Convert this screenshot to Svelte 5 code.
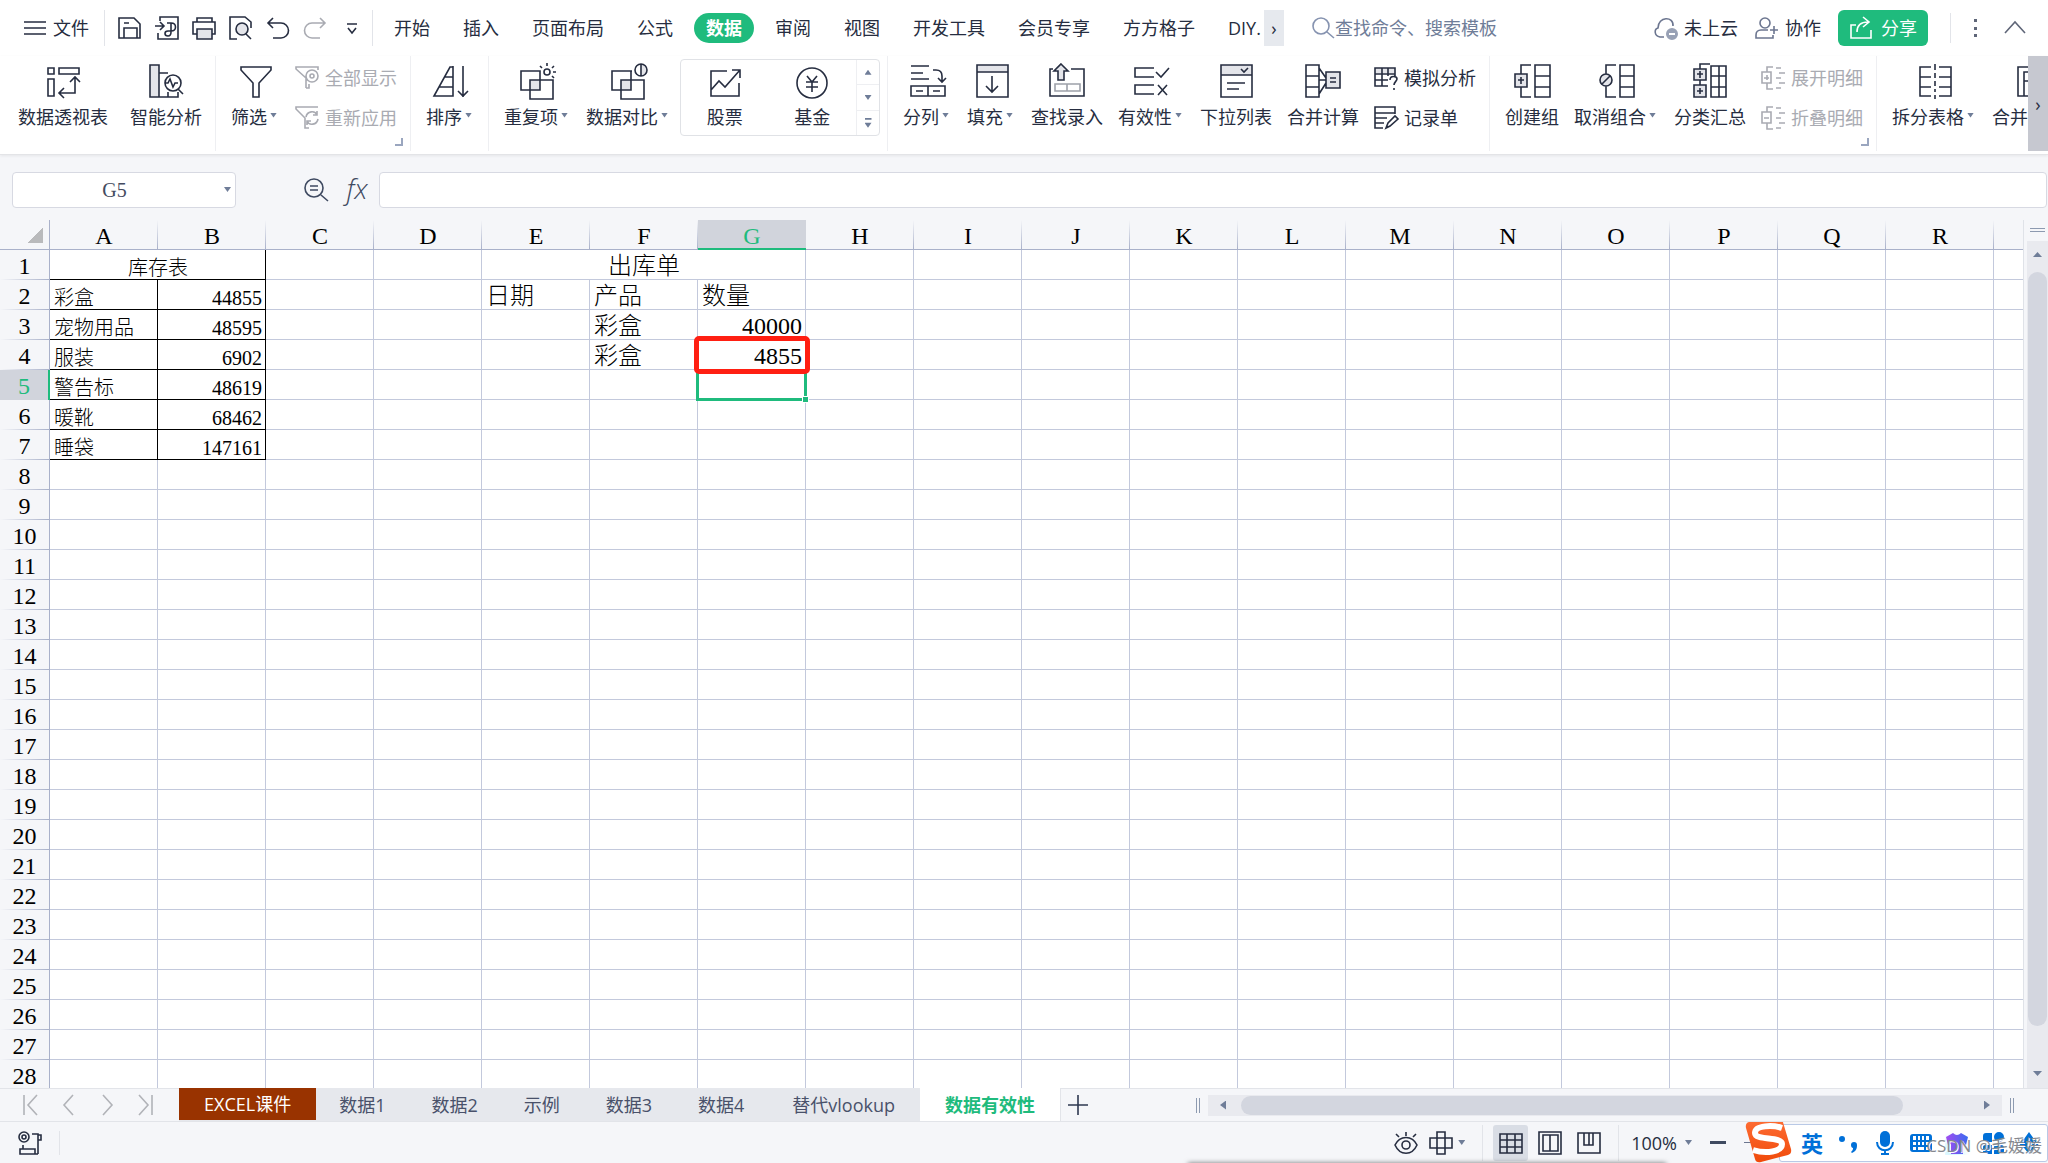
<script>
	let activeMenu = $state('数据');
	let activeSheet = $state('数据有效性');
	let zoom = $state(100);
	let cellName = $state('G5');
	let formula = $state('');

	// line: stroked path, shade: light filled area behind, solid: filled with the text colour
	const icons = {
		menu: { size: 24, line: 'M1 6h22M1 12h22M1 18h22' },
		save: { size: 24, line: 'M1 2h15l6 6v14H1zM6 22V12h13v10M6 7h5' },
		output: {
			size: 24,
			line: 'M5 5V1h18v22H3v-6M0 10h8M5 6l4 4-4 4M12 7h4c6 0 6 8 0 8h-3c-4 0-4 5 0 5 3 0 3-2 3-4V7'
		},
		print: { size: 24, shade: 'M5 13h15v10H5z', line: 'M5 6V2h15v4M5 18H1V6h22v12h-3M5 13h15v10H5z' },
		preview: {
			size: 24,
			shade: 'M7 13a6 6 0 1 0 12 0a6 6 0 1 0-12 0z',
			line: 'M8 23H1V1h15l6 5v6M7 13a6 6 0 1 0 12 0a6 6 0 1 0-12 0zM17 18l5 5'
		},
		undo: { size: 24, line: 'M7 2L2 7l5 5M2 7h13a7 7 0 0 1 0 15H7' },
		redo: { size: 24, line: 'M17 2l5 5-5 5M22 7H9a7 7 0 0 0 0 15h8' },
		more: { size: 24, line: 'M7 8h10M8 12l4 5 4-5' },
		search: { size: 24, line: 'M2 10a8 8 0 1 0 16 0a8 8 0 1 0-16 0zM16 16l7 6' },
		cloud: {
			size: 24,
			line: 'M10 21H6c-6-1-6-8-2-9 0-12 16-12 15-2',
			solid: 'M12 18a6 6 0 1 1 12 0a6 6 0 1 1-12 0zM15 17v2h6v-2z'
		},
		person: {
			size: 24,
			line: 'M5 7a5 5 0 1 0 10 0a5 5 0 1 0-10 0zM13 14H6c-3 0-5 2-5 5v3h17v-3M15 14h8M19 10v8'
		},
		share: { size: 24, line: 'M7 9H2v13h20v-8M8 16c0-6 3-10 11-10M14 1l6 5-6 5' },
		dots: { size: 24, solid: 'M11 3h3v3h-3zM11 11h3v3h-3zM11 18h3v3h-3z' },
		up: { size: 24, line: 'M2 17L12 6l10 11' },
		pivot: {
			size: 36,
			line: 'M3 5h6v6H3zM14 5h20v6H14zM3 16h6v17H3zM30 14v16H15M25 19l5-5 5 5M19 25l-5 5 5 5'
		},
		smart: {
			size: 36,
			shade: 'M2 2h9v32H2z',
			line: 'M2 2h9v32H2zM11 10h9M11 34h19v-5M20 34v-5M17 20a8 8 0 1 0 16 0a8 8 0 1 0-16 0zM30 26l5 5M17 20h3l2-4 3 8 2-4h3'
		},
		filter: { size: 36, line: 'M3 4h30v3L21 20v14h-6V20L3 7z' },
		showAll: {
			size: 24,
			line: 'M11 22V12L1 3V1h22v3M11 22h3v-4M11 10a6 6 0 1 0 12 0a6 6 0 1 0-12 0zM15 10a2 2 0 1 0 4 0a2 2 0 1 0-4 0z'
		},
		reapply: {
			size: 24,
			line: 'M14 22h-4V12L1 3V1h22M11 11c1-6 9-7 11-2M22 5v4h-4M23 13c-1 6-9 7-11 2M12 19v-4h4'
		},
		sort: { size: 36, line: 'M20 3v30H1L17 4h3M12 14h8M6 24h14M30 3v31M25 28l5 5 5-5' },
		duplicate: {
			size: 36,
			shade: 'M10 17h10v10H10z',
			line: 'M1 8h19v19H1zM10 17h23v19H10zM24 9a3 3 0 1 0 6 0a3 3 0 1 0-6 0zM27 0v3M20 3l2 2M34 3l-2 2M33 9h3M32 13l2 2'
		},
		compare: {
			size: 36,
			shade: 'M10 17h10v10H10zM30 1a6 6 0 0 1 0 12z',
			line: 'M21 8H1v19h19V17M10 17h23v19H10zM20 8v9M24 7a6 6 0 1 0 12 0a6 6 0 1 0-12 0zM30 1v12'
		},
		stock: { size: 36, line: 'M20 8H4v25h28V20M4 27l8-9 6 6L33 7M25 7h8v8' },
		fund: {
			size: 36,
			line: 'M3 20a15 15 0 1 0 30 0a15 15 0 1 0-30 0zM13 13l5 6 5-6M18 19v10M12 19h12M12 24h12'
		},
		columns: {
			size: 36,
			line: 'M1 3h18M1 10h12M1 16h18M23 7h3q6 0 6 6v6M28 15l4 4 4-4M1 23h34v10H1zM18 23v10M6 28h7M23 28h7'
		},
		fill: { size: 36, shade: 'M3 2h31v7H3z', line: 'M3 2h31v32H3zM3 9h31M18 13v16M12 23l6 6 6-6' },
		findEntry: {
			size: 36,
			shade: 'M12 1l7 7h-4v9H9V8H5z',
			line: 'M4 6H1v27h34V6H22M12 1l7 7h-4v9H9V8H5z',
			faint: 'M6 21h25v7H6zM18 21v7'
		},
		validity: { size: 36, line: 'M20 5H1v9h19M20 22H1v9h19M22 9l5 5 8-9M24 22l9 10M33 22l-9 10' },
		dropdown: {
			size: 36,
			shade: 'M3 2h31v10H3z',
			line: 'M3 2h31v32H3zM3 12h31M23 6l3 3 4-4M9 20h18M9 26h12'
		},
		consolidate: {
			size: 36,
			shade: 'M21 9h14v16H21z',
			line: 'M1 2h13v32H1zM1 13h13M1 24h13M21 9h14v16H21zM25 15h6M25 19h6M14 5l7 10M14 17h7M14 31l7-11'
		},
		whatIf: {
			size: 24,
			shade: 'M1 2h20v5H1z',
			line: 'M14 20H1V2h20v8M1 8h20M1 14h13M8 2v18M14 2v8M16 14c0-5 7-4 7-1 0 2-3 3-3 6M20 22v2'
		},
		record: { size: 24, line: 'M9 22H1v-6M21 8V1H1v6h20M1 12h12M1 17h9M1 7v9M12 22l2-5 7-7 3 3-8 7z' },
		group: {
			size: 36,
			shade: 'M1 11h12v13H1z',
			line: 'M1 11h12v13H1zM4 17h6M7 14v7M17 2H7v9M7 24v10h10M21 2h15v32H21zM21 13h15M21 24h15'
		},
		ungroup: {
			size: 36,
			shade: 'M1 17a6 6 0 1 0 12 0a6 6 0 1 0-12 0z',
			line: 'M1 17a6 6 0 1 0 12 0a6 6 0 1 0-12 0zM3 21l8-8M17 2H7v9M7 23v11h10M21 2h14v32H21zM21 13h14M21 24h14'
		},
		subtotal: {
			size: 36,
			shade: 'M2 6h12v11H2zM2 22h12v12H2z',
			line: 'M2 6h12v11H2zM2 22h12v12H2zM8 8v7M5 11h6M8 25v6M5 28h6M8 6V1h10M8 17v5M19 3h15v31H19zM27 3v31M19 13h15M19 24h15'
		},
		expand: {
			size: 24,
			line: 'M1 6h9v11H1zM3 12h5M6 9v5M6 6V1h6M6 17v6h6M15 2h5M18 7h6M15 12h5M18 17h6M15 22h5'
		},
		collapse: {
			size: 24,
			line: 'M1 6h9v11H1zM3 12h5M6 6V1h6M6 17v6h6M15 2h5M18 7h6M15 12h5M18 17h6M15 22h5'
		},
		split: {
			size: 36,
			line: 'M14 4H3v29h11M3 14h11M3 24h11M22 4h12v29H22M22 14h12M22 24h12M18 1v6M18 10v5M18 18v5M18 26v3M18 32v4'
		},
		merge: { size: 36, line: 'M22 4H1v29h6M7 33V9h20v24zM7 18h20' },
		formulaSearch: { size: 24, line: 'M1 10a9 9 0 1 0 18 0a9 9 0 1 0-18 0zM17 17l7 6M6 8h8M6 12h8' },
		first: { size: 24, line: 'M5 2v20M18 2L9 12l9 10' },
		prev: { size: 24, line: 'M16 2L7 12l9 10' },
		next: { size: 24, line: 'M8 2l9 10-9 10' },
		last: { size: 24, line: 'M19 2v20M6 2l9 10-9 10' },
		add: { size: 24, line: 'M12 2v20M2 12h20' },
		macro: {
			size: 24,
			line: 'M1 6a5 5 0 1 0 10 0a5 5 0 1 0-10 0zM4 6a2 2 0 1 0 4 0a2 2 0 1 0-4 0zM14 3h6v20M20 4h3v5h-3M5 14v4M2 18h15v5H2zM17 23h3'
		},
		eye: {
			size: 24,
			line: 'M1 14c5-10 17-10 22 0-5 11-17 11-22 0zM8 14a4 4 0 1 0 8 0a4 4 0 1 0-8 0zM12 1v4M2 3l3 3M22 3l-3 3'
		},
		cross: { size: 24, line: 'M8 1h8v22H8zM1 7h22v10H1z' },
		normal: { size: 24, line: 'M1 3h22v19H1zM8 3v19M16 3v19M1 9h22M1 16h22' },
		pageView: { size: 24, line: 'M1 1h22v22H1zM5 4h15v16H5zM12 4v16' },
		breakView: { size: 24, line: 'M1 2h22v20H1zM7 2v12h9V2M12 2v12' },
		mic: {
			size: 24,
			line: 'M4 11c0 11 16 11 16 0M12 19v4M8 23h8',
			solid: 'M7 5a5 5 0 0 1 10 0v6a5 5 0 0 1-10 0z'
		},
		keyboard: {
			size: 24,
			solid:
				'M4 3h16a3 3 0 0 1 3 3v12a3 3 0 0 1-3 3H4a3 3 0 0 1-3-3V6a3 3 0 0 1 3-3zM4 5v4h3V5zM9 5v4h2V5zM13 5v4h2V5zM17 5v4h3V5zM4 11v3h3v-3zM9 11v3h2v-3zM13 11v3h2v-3zM17 11v3h3v-3zM4 16v3h3v-3zM9 16v3h6v-3zM17 16v3h3v-3z'
		},
		punctuation: {
			size: 24,
			solid: 'M2 8a3 3 0 1 0 6 0a3 3 0 1 0-6 0zM14 14a3 3 0 0 1 6 0c0 4-1 6-5 8l-1-1c2-2 2-3 2-4-1 0-2-1-2-3z'
		},
		shirt: { size: 24, solid: 'M8 2q4 4 8 0l7 4-2 8-3-1v10H6V13l-3 1-2-8z' },
		tools: {
			size: 24,
			solid:
				'M2 5a3 3 0 0 1 3-3h6v9H5a3 3 0 0 1-3-3zM13 6a4 4 0 1 1 10 0a4 4 0 1 1-10 0zM2 14h9v9H5a3 3 0 0 1-3-3zM13 14h7a3 3 0 0 1 3 3v3a3 3 0 0 1-3 3h-7z'
		},
		diamond: { size: 24, solid: 'M12 1l5 7 6 4-6 5-5 6-5-6-6-5 6-4zM10 10v5h4v-5z' }
	};

	const quickTools = [
		['save', '保存'],
		['output', '输出为PDF'],
		['print', '打印'],
		['preview', '打印预览'],
		['undo', '撤销'],
		['redo', '恢复'],
		['more', '自定义']
	];

	const menus = ['开始', '插入', '页面布局', '公式', '数据', '审阅', '视图', '开发工具', '会员专享', '方方格子', 'DIY.'];

	const ribbon = [
		{ wide: true, tools: [{ icon: 'pivot', name: '数据透视表' }, { icon: 'smart', name: '智能分析' }] },
		{
			corner: true,
			tools: [
				{ icon: 'filter', name: '筛选', arrow: true },
				{ off: true, stack: [['showAll', '全部显示'], ['reapply', '重新应用']] }
			]
		},
		{ tools: [{ icon: 'sort', name: '排序', arrow: true }] },
		{
			gallery: [['stock', '股票'], ['fund', '基金']],
			tools: [
				{ icon: 'duplicate', name: '重复项', arrow: true },
				{ icon: 'compare', name: '数据对比', arrow: true }
			]
		},
		{
			tools: [
				{ icon: 'columns', name: '分列', arrow: true },
				{ icon: 'fill', name: '填充', arrow: true },
				{ icon: 'findEntry', name: '查找录入' },
				{ icon: 'validity', name: '有效性', arrow: true },
				{ icon: 'dropdown', name: '下拉列表' },
				{ icon: 'consolidate', name: '合并计算' },
				{ stack: [['whatIf', '模拟分析'], ['record', '记录单']] }
			]
		},
		{
			corner: true,
			tools: [
				{ icon: 'group', name: '创建组' },
				{ icon: 'ungroup', name: '取消组合', arrow: true },
				{ icon: 'subtotal', name: '分类汇总' },
				{ off: true, stack: [['expand', '展开明细'], ['collapse', '折叠明细']] }
			]
		},
		{
			tools: [
				{ icon: 'split', name: '拆分表格', arrow: true },
				{ icon: 'merge', name: '合并表格', arrow: true }
			]
		}
	];

	const columns = 'ABCDEFGHIJKLMNOPQR'.split('').concat('');
	const rows = Array.from({ length: 28 }, (_, i) => i + 1);

	const stockRows = [
		['彩盒', 44855],
		['宠物用品', 48595],
		['服装', 6902],
		['警告标', 48619],
		['暖靴', 68462],
		['睡袋', 147161]
	];

	const cells = {
		A1: { text: '库存表', span: 2, box: true, center: true },
		E1: { text: '出库单', span: 3, center: true, large: true },
		E2: { text: '日期', large: true },
		F2: { text: '产品', large: true },
		G2: { text: '数量', large: true },
		F3: { text: '彩盒', large: true },
		G3: { text: 40000, large: true },
		F4: { text: '彩盒', large: true },
		G4: { text: 4855, large: true, marked: true },
		G5: { text: '', selected: true }
	};
	stockRows.forEach(([name, amount], i) => {
		cells['A' + (i + 2)] = { text: name, box: true };
		cells['B' + (i + 2)] = { text: amount, box: true };
	});

	// cells of one row, leaving out the ones covered by a merge
	function rowCells(row) {
		const out = [];
		for (let i = 0; i < columns.length; ) {
			const cell = cells[columns[i] + row] || { text: '' };
			out.push(cell);
			i += cell.span || 1;
		}
		return out;
	}

	const sheets = ['EXCEL课件', '数据1', '数据2', '示例', '数据3', '数据4', '替代vlookup', '数据有效性'];
</script>

{#snippet icon(name)}
	{@const i = icons[name]}
	<svg class="icon" width={i.size} height={i.size} viewBox="0 0 {i.size} {i.size}" aria-hidden="true">
		{#if i.shade}<path class="shade" d={i.shade} />{/if}
		{#if i.solid}<path class="solid" fill-rule="evenodd" d={i.solid} />{/if}
		{#if i.faint}<path class="line faint" d={i.faint} />{/if}
		{#if i.line}<path class="line" d={i.line} />{/if}
	</svg>
{/snippet}

<div class="app">
	<header class="titlebar">
		<button class="file">{@render icon('menu')}文件</button>
		<div class="quick">
			{#each quickTools as [name, title]}
				<button {title} aria-label={title} class:off={name === 'redo'}>{@render icon(name)}</button>
			{/each}
		</div>
		<nav class="menus">
			{#each menus as m}
				<button class="menu" class:active={m === activeMenu} onclick={() => (activeMenu = m)}>{m}</button>
			{/each}
		</nav>
		<button class="menu-next" aria-label="更多选项卡">›</button>
		<label class="search">
			{@render icon('search')}
			<input type="text" placeholder="查找命令、搜索模板" />
		</label>
		<div class="account">
			<button class="soft">{@render icon('cloud')}<span>未上云</span></button>
			<button class="soft">{@render icon('person')}<span>协作</span></button>
			<button class="share">{@render icon('share')}分享</button>
			<div class="window">
				<button aria-label="更多">{@render icon('dots')}</button>
				<button aria-label="收起功能区">{@render icon('up')}</button>
			</div>
		</div>
	</header>

	<div class="ribbon">
		<div class="groups">
			{#each ribbon as g}
				<div class="group" class:wide={g.wide} class:corner={g.corner}>
					{#each g.tools as t}
						{#if t.stack}
							<div class="stack" class:off={t.off}>
								{#each t.stack as [name, label]}
									<button disabled={t.off}>{@render icon(name)}{label}</button>
								{/each}
							</div>
						{:else}
							<button class="tool">
								{@render icon(t.icon)}
								<span class="label">{t.name}{#if t.arrow}<i class="arrow"></i>{/if}</span>
							</button>
						{/if}
					{/each}
					{#if g.gallery}
						<div class="gallery">
							{#each g.gallery as [name, label]}
								<button class="tool">{@render icon(name)}<span class="label">{label}</span></button>
							{/each}
							<div class="gallery-scroll">
								<button aria-label="上一行"><i class="arrow rise"></i></button>
								<button aria-label="下一行"><i class="arrow"></i></button>
								<button aria-label="展开"><i class="arrow barred"></i></button>
							</div>
						</div>
					{/if}
				</div>
			{/each}
		</div>
		<button class="ribbon-next" aria-label="向右滚动">›</button>
	</div>

	<div class="formula-bar">
		<div class="name-box">
			<input type="text" aria-label="名称框" bind:value={cellName} />
			<i class="arrow"></i>
		</div>
		<button class="lookup" aria-label="查找公式">{@render icon('formulaSearch')}</button>
		<button class="fx">fx</button>
		<input class="formula" type="text" aria-label="编辑栏" bind:value={formula} />
	</div>

	<main class="sheet">
		<div class="grid">
			<table>
				<thead>
					<tr>
						<th class="all"></th>
						{#each columns as c}
							<th class="col" class:current={c === 'G'}>{c}</th>
						{/each}
					</tr>
				</thead>
				<tbody>
					{#each rows as r}
						<tr>
							<th class="row" class:current={r === 5}>{r}</th>
							{#each rowCells(r) as c}
								<td
									colspan={c.span || 1}
									class:box={c.box}
									class:center={c.center}
									class:large={c.large}
									class:number={typeof c.text === 'number'}
									class:marked={c.marked}
									class:selected={c.selected}>{c.text}</td
								>
							{/each}
						</tr>
					{/each}
				</tbody>
			</table>
		</div>
		<div class="vscroll">
			<div class="vsplit"></div>
			<div class="vtrack">
				<i class="arrow rise"></i>
				<div class="thumb"></div>
				<i class="arrow"></i>
			</div>
		</div>
	</main>

	<div class="tabbar">
		<div class="sheet-nav">
			<button aria-label="第一个">{@render icon('first')}</button>
			<button aria-label="上一个">{@render icon('prev')}</button>
			<button aria-label="下一个">{@render icon('next')}</button>
			<button aria-label="最后一个">{@render icon('last')}</button>
		</div>
		<div class="tabs">
			{#each sheets as s, i}
				<button
					class="tab"
					class:long={s.length > 4}
					class:brown={i === 0}
					class:active={s === activeSheet}
					onclick={() => (activeSheet = s)}>{s}</button
				>
			{/each}
		</div>
		<button class="add" aria-label="新建工作表">{@render icon('add')}</button>
		<div class="hscroll">
			<div class="grip"></div>
			<div class="htrack">
				<i class="arrow left"></i>
				<div class="thumb"></div>
				<i class="arrow right"></i>
			</div>
			<div class="grip"></div>
		</div>
	</div>

	<footer class="status">
		<div class="status-left">
			<button aria-label="宏">{@render icon('macro')}</button>
		</div>
		<div class="status-right">
			<button aria-label="护眼模式">{@render icon('eye')}</button>
			<button class="reading" aria-label="阅读模式">{@render icon('cross')}<i class="arrow"></i></button>
			<div class="views">
				<button class="view active" aria-label="普通视图">{@render icon('normal')}</button>
				<button class="view" aria-label="页面布局">{@render icon('pageView')}</button>
				<button class="view" aria-label="分页预览">{@render icon('breakView')}</button>
			</div>
			<button class="percent">{zoom}%<i class="arrow"></i></button>
			<button class="minus" aria-label="缩小" onclick={() => (zoom -= 10)}></button>
			<input class="zoom" type="range" min="10" max="400" aria-label="缩放" bind:value={zoom} />
		</div>
		<div class="shadow"></div>
		<div class="ime">
			<svg class="sogou" width="50" height="48" viewBox="0 0 50 48" aria-hidden="true">
				<defs>
					<linearGradient id="orange" x1="0" y1="0" x2="0" y2="1">
						<stop offset="0" stop-color="#ff7038" />
						<stop offset="1" stop-color="#f04a0a" />
					</linearGradient>
					<linearGradient id="violet" x1="0" y1="0" x2="1" y2="0">
						<stop offset="0" stop-color="#a24cf0" />
						<stop offset="1" stop-color="#3a6cf0" />
					</linearGradient>
				</defs>
				<path
					fill="url(#orange)"
					d="M5 7L33 1q4-1 5 3l9 30q1 5-3 6L17 47q-5 1-6-3L2 13q-1-5 3-6z"
				/>
				<path
					fill="none"
					stroke="#fff"
					stroke-width="6"
					d="M38 13C29 10 11 10 11 18c0 8 27 3 27 11 0 8-16 10-29 6"
				/>
			</svg>
			<span class="lang">英</span>
			{@render icon('punctuation')}
			{@render icon('mic')}
			{@render icon('keyboard')}
			<span class="skin">{@render icon('shirt')}</span>
			{@render icon('tools')}
			{@render icon('diamond')}
			<span class="credit">CSDN @毛媛媛</span>
		</div>
	</footer>
</div>

<style>
	:global(body) {
		margin: 0;
		overflow: hidden;
	}

	.app {
		--ink: #262d40;
		--soft: #6f7d98;
		--green: #1fbb7d;
		--bar: #f5f6f9;
		--rule: #e2e4e9;
		display: flex;
		flex-direction: column;
		height: 100vh;
		background: var(--bar);
		color: var(--ink);
		font: 400 18px/24px 'Open Sans', 'Noto Sans CJK SC', sans-serif;
	}

	button,
	input {
		margin: 0;
		padding: 0;
		border: 0;
		background: none;
		color: inherit;
		font: inherit;
		outline: none;
	}

	button {
		display: flex;
		align-items: center;
		flex-shrink: 0;
		white-space: nowrap;
	}

	.icon {
		display: block;
		flex-shrink: 0;
		overflow: visible;
	}

	.line {
		fill: none;
		stroke: currentColor;
		stroke-width: 1.6;
	}

	.faint {
		opacity: 0.45;
	}

	.shade {
		fill: #e4e5ea;
	}

	.solid {
		fill: currentColor;
	}

	.arrow {
		flex-shrink: 0;
		width: 7px;
		height: 5px;
		background: var(--soft);
		clip-path: polygon(0 0, 100% 0, 50% 100%);
	}

	.arrow.rise {
		clip-path: polygon(50% 0, 100% 100%, 0 100%);
	}

	.arrow.left,
	.arrow.right {
		width: 6px;
		height: 9px;
	}

	.arrow.left {
		clip-path: polygon(100% 0, 100% 100%, 0 50%);
	}

	.arrow.right {
		clip-path: polygon(0 0, 100% 50%, 0 100%);
	}

	.arrow.barred {
		height: 10px;
		clip-path: polygon(0 0, 100% 0, 100% 20%, 0 20%, 0 50%, 100% 50%, 50% 100%, 0 50%);
	}

	.off {
		color: #a9abb2;
	}

	/* title bar */
	.titlebar {
		display: flex;
		align-items: center;
		height: 56px;
		background: #fff;
	}

	.file {
		gap: 6px;
		padding: 0 15px 0 23px;
		height: 36px;
		border-right: 1px solid var(--rule);
	}

	.quick {
		display: flex;
		align-items: center;
		gap: 13px;
		height: 36px;
		padding: 0 8px 0 13px;
		border-right: 1px solid var(--rule);
	}

	.menus {
		display: flex;
		flex: 0 1 882px;
		gap: 9px;
		padding-left: 9px;
		overflow: hidden;
	}

	.menu {
		height: 30px;
		padding: 0 12px;
		border-radius: 15px;
	}

	.menu.active {
		background: var(--green);
		color: #fff;
		font-weight: 700;
	}

	.menu-next {
		justify-content: center;
		width: 20px;
		height: 36px;
		background: #e6e9ee;
	}

	.search {
		display: flex;
		flex: 1;
		align-items: center;
		min-width: 0;
		margin-left: 27px;
		color: #8693b0;
	}

	.search input {
		width: 100%;
	}

	.search input::placeholder {
		color: var(--soft);
		opacity: 1;
	}

	.account {
		display: flex;
		align-items: center;
		padding-right: 21px;
		gap: 17px;
	}

	.soft {
		gap: 6px;
		color: #6c7690;
	}

	.soft .solid {
		fill: #98a1b5;
	}

	.soft span {
		color: var(--ink);
	}

	.share {
		gap: 8px;
		height: 36px;
		padding: 0 11px;
		border-radius: 6px;
		background: var(--green);
		color: #fff;
	}

	.window {
		display: flex;
		gap: 16px;
		margin-left: 5px;
		padding: 3px 0 3px 12px;
		border-left: 1px solid var(--rule);
		color: #5f6678;
	}

	/* ribbon */
	.ribbon {
		display: flex;
		height: 98px;
		border-bottom: 1px solid #e3e4e7;
		background: #fff;
		box-shadow: 0 1px 3px #0001;
		z-index: 1;
	}

	.groups {
		display: flex;
		flex: 1;
		min-width: 0;
		padding-left: 3px;
		overflow: hidden;
	}

	.group {
		position: relative;
		display: flex;
		flex-shrink: 0;
		height: 95px;
		padding: 0 6px 0 7px;
		border-right: 1px solid #eeeff2;
	}

	.group:last-child {
		border-right: 0;
	}

	.group.wide {
		gap: 7px;
	}

	.group.corner::after {
		content: '';
		position: absolute;
		right: 7px;
		bottom: 5px;
		width: 6px;
		height: 6px;
		border: solid #9aa6bf;
		border-width: 0 2px 2px 0;
	}

	.tool {
		flex-direction: column;
		gap: 6px;
		padding: 7px 7px 0 8px;
	}

	.label {
		display: flex;
		align-items: center;
		gap: 3px;
	}

	.label .arrow {
		margin: 0 3px 4px 0;
	}

	.stack {
		display: flex;
		flex-direction: column;
		gap: 16px;
		padding: 10px 7px 0 8px;
	}

	.stack button {
		gap: 6px;
	}

	.gallery {
		display: flex;
		box-sizing: border-box;
		width: 200px;
		height: 77px;
		margin: 3px 1px 0 2px;
		border: 1px solid #e0e2e6;
		border-radius: 4px;
	}

	.gallery .tool {
		flex: 1;
		padding: 3px 0 0;
	}

	.gallery-scroll {
		display: flex;
		flex-direction: column;
		width: 22px;
		border-left: 1px solid #eeeff2;
	}

	.gallery-scroll button {
		flex: 1;
		justify-content: center;
	}

	.gallery-scroll button + button {
		border-top: 1px solid #eeeff2;
	}

	.ribbon-next {
		justify-content: center;
		width: 20px;
		height: 95px;
		background: #c6c8d0;
	}

	/* formula bar */
	.formula-bar {
		display: flex;
		align-items: center;
		height: 35px;
		padding: 17px 1px 13px 12px;
	}

	.name-box {
		display: flex;
		align-items: center;
		box-sizing: border-box;
		width: 224px;
		height: 36px;
		padding-right: 4px;
		border: 1px solid #d7d9e2;
		border-radius: 4px;
		background: #fff;
	}

	.name-box input {
		flex: 1;
		min-width: 0;
		padding-right: 8px;
		text-align: center;
		color: #444b60;
		font: 20px/24px 'Liberation Serif', serif;
	}

	.lookup {
		margin-left: 68px;
		color: #3f4a61;
	}

	.fx {
		justify-content: center;
		width: 36px;
		margin: 0 4px 4px 11px;
		color: #3f4a61;
		font: italic 300 28px/30px 'Open Sans', sans-serif;
	}

	.formula {
		box-sizing: border-box;
		flex: 1;
		min-width: 0;
		height: 36px;
		padding: 0 8px;
		border: 1px solid #d7d9e2;
		border-radius: 4px;
		background: #fff;
	}

	/* sheet */
	.sheet {
		display: flex;
		flex: 1;
		min-height: 0;
	}

	.grid {
		flex: 1;
		min-width: 0;
		overflow: hidden;
		border-right: 1px solid #dfe2e8;
	}

	table {
		border-spacing: 0;
		color: #000;
		font: 300 20px/24px 'Liberation Serif', 'Noto Sans CJK SC', serif;
	}

	th,
	td {
		box-sizing: border-box;
		height: 30px;
		padding: 0;
	}

	th {
		padding-top: 2px;
		background: var(--bar);
		font-size: 24px;
		font-weight: 400;
	}

	.all {
		min-width: 50px;
		border-right: 1px solid #a9b1ca;
		border-bottom: 1px solid #a9b1ca;
		background: linear-gradient(135deg, transparent 50%, #b9babc 50%) 28px 8px / 15px 15px no-repeat;
	}

	.col {
		min-width: 108px;
		border-bottom: 1px solid #a9b1ca;
		background: linear-gradient(transparent, #a9b1ca) right / 1px 100% no-repeat;
	}

	.col.current {
		padding-top: 3px;
		border-bottom: 2px solid var(--green);
		background: #d1d4dc;
		color: var(--green);
	}

	.row {
		border-right: 1px solid #a9b1ca;
		background: linear-gradient(90deg, transparent, #a9b1ca) bottom / 100% 1px no-repeat;
	}

	.row.current {
		border-right: 2px solid var(--green);
		background: #d1d4dc;
		color: var(--green);
	}

	td {
		position: relative;
		padding: 6px 3px 0 4px;
		border-right: 1px solid #c3c9dc;
		border-bottom: 1px solid #c3c9dc;
		background: #fff;
		line-height: 22px;
		white-space: nowrap;
	}

	td.box {
		border-color: #000;
	}

	td.large {
		padding-top: 2px;
		font-size: 24px;
	}

	td.center {
		text-align: center;
	}

	td.number {
		text-align: right;
	}

	td.marked {
		z-index: 2;
	}

	td.selected {
		z-index: 1;
	}

	td.marked::after,
	td.selected::before {
		content: '';
		position: absolute;
		border: 3px solid var(--green);
		inset: -3px -2px -2px;
	}

	td.marked::after {
		border: 5px solid #ff1f12;
		border-radius: 5px;
		inset: -4px -5px -5px -4px;
	}

	td.selected::after {
		content: '';
		position: absolute;
		right: -4px;
		bottom: -4px;
		width: 5px;
		height: 5px;
		border: 1px solid #fff;
		background: var(--green);
	}

	.vscroll {
		display: flex;
		flex-direction: column;
		width: 21px;
		margin-left: 3px;
	}

	.vsplit {
		height: 2px;
		margin: 8px 3px 9px;
		border: solid #8d9ab0;
		border-width: 1px 0;
	}

	.vtrack,
	.htrack {
		display: flex;
		flex: 1;
		align-items: center;
		background: #e9eaef;
	}

	.vtrack {
		flex-direction: column;
		gap: 15px;
		padding: 11px 0 12px;
	}

	.vtrack .arrow {
		width: 9px;
	}

	.vtrack .thumb {
		width: 19px;
		flex: 1;
		margin-bottom: 30px;
	}

	.thumb {
		border-radius: 10px;
		background: #d3d6df;
	}

	/* sheet tabs */
	.tabbar {
		display: flex;
		height: 32px;
		border-top: 1px solid var(--rule);
		border-bottom: 1px solid var(--rule);
		background: var(--bar);
	}

	.sheet-nav {
		display: flex;
		align-items: center;
		box-sizing: border-box;
		gap: 14px;
		width: 179px;
		padding-left: 19px;
		color: #b1b3b8;
	}

	.tabs {
		display: flex;
		margin-top: -1px;
		background: #e6e8ed;
		border-right: 1px solid var(--rule);
	}

	.tab {
		padding: 0 23px;
		color: #49516a;
	}

	.tab.long {
		padding: 0 25px;
	}

	.tab.brown {
		margin-bottom: 1px;
		background: #993300;
		color: #fff;
	}

	.tab.active {
		background: #fff;
		color: var(--green);
		font-weight: 700;
	}

	.add {
		margin-left: 5px;
		color: #2e3850;
	}

	.hscroll {
		display: flex;
		align-items: center;
		gap: 8px;
		width: 818px;
		margin-left: auto;
		margin-right: 34px;
	}

	.grip {
		width: 2px;
		height: 15px;
		border: solid #8d9ab0;
		border-width: 0 1px;
	}

	.htrack {
		height: 21px;
		padding: 0 12px;
		gap: 15px;
	}

	.htrack .thumb {
		flex: 1;
		height: 19px;
		margin-right: 66px;
	}

	/* status bar */
	.status {
		position: relative;
		display: flex;
		align-items: center;
		height: 41px;
		overflow: hidden;
	}

	.status-left {
		padding: 0 17px 0 18px;
		border-right: 1px solid var(--rule);
	}

	.status-right {
		display: flex;
		align-items: center;
		margin-left: auto;
	}

	.reading {
		gap: 5px;
		margin: 0 17px 0 11px;
	}

	.views {
		display: flex;
		gap: 4px;
		padding: 0 12px 0 10px;
		border: solid var(--rule);
		border-width: 0 1px;
	}

	.view {
		justify-content: center;
		width: 35px;
		height: 36px;
		border-radius: 3px;
	}

	.view.active {
		background: #d9dde5;
	}

	.percent {
		gap: 8px;
		margin: 0 18px 0 12px;
	}

	.minus {
		width: 16px;
		height: 3px;
		margin-right: 18px;
		background: #3f4a61;
	}

	.zoom {
		width: 304px;
		height: 1px;
		background: #6c7690;
		appearance: none;
	}

	.shadow {
		position: absolute;
		left: 58%;
		right: 382px;
		bottom: -6px;
		height: 6px;
		box-shadow: 0 0 5px #0008;
	}

	.ime {
		position: absolute;
		right: 0;
		bottom: 1px;
		display: flex;
		align-items: center;
		gap: 12px;
		height: 36px;
		padding: 0 6px 0 21px;
		border: 1px solid #b9c9e6;
		border-radius: 3px;
		background: #fff;
		color: #0070d8;
	}

	.ime .line {
		stroke-width: 2;
	}

	.sogou {
		position: absolute;
		left: -36px;
		bottom: -2px;
	}

	.lang {
		width: 24px;
		font-size: 22px;
		font-weight: 700;
	}

	.skin {
		background: radial-gradient(circle at 30% 80%, #c8f3ff, transparent 70%);
	}

	.skin .solid,
	.skin :global(.solid) {
		fill: url(#violet);
	}

	.credit {
		position: absolute;
		right: 5px;
		bottom: 3px;
		color: #85888e;
		font-size: 17px;
		text-shadow: 1px 1px 0 #fff;
	}
</style>
